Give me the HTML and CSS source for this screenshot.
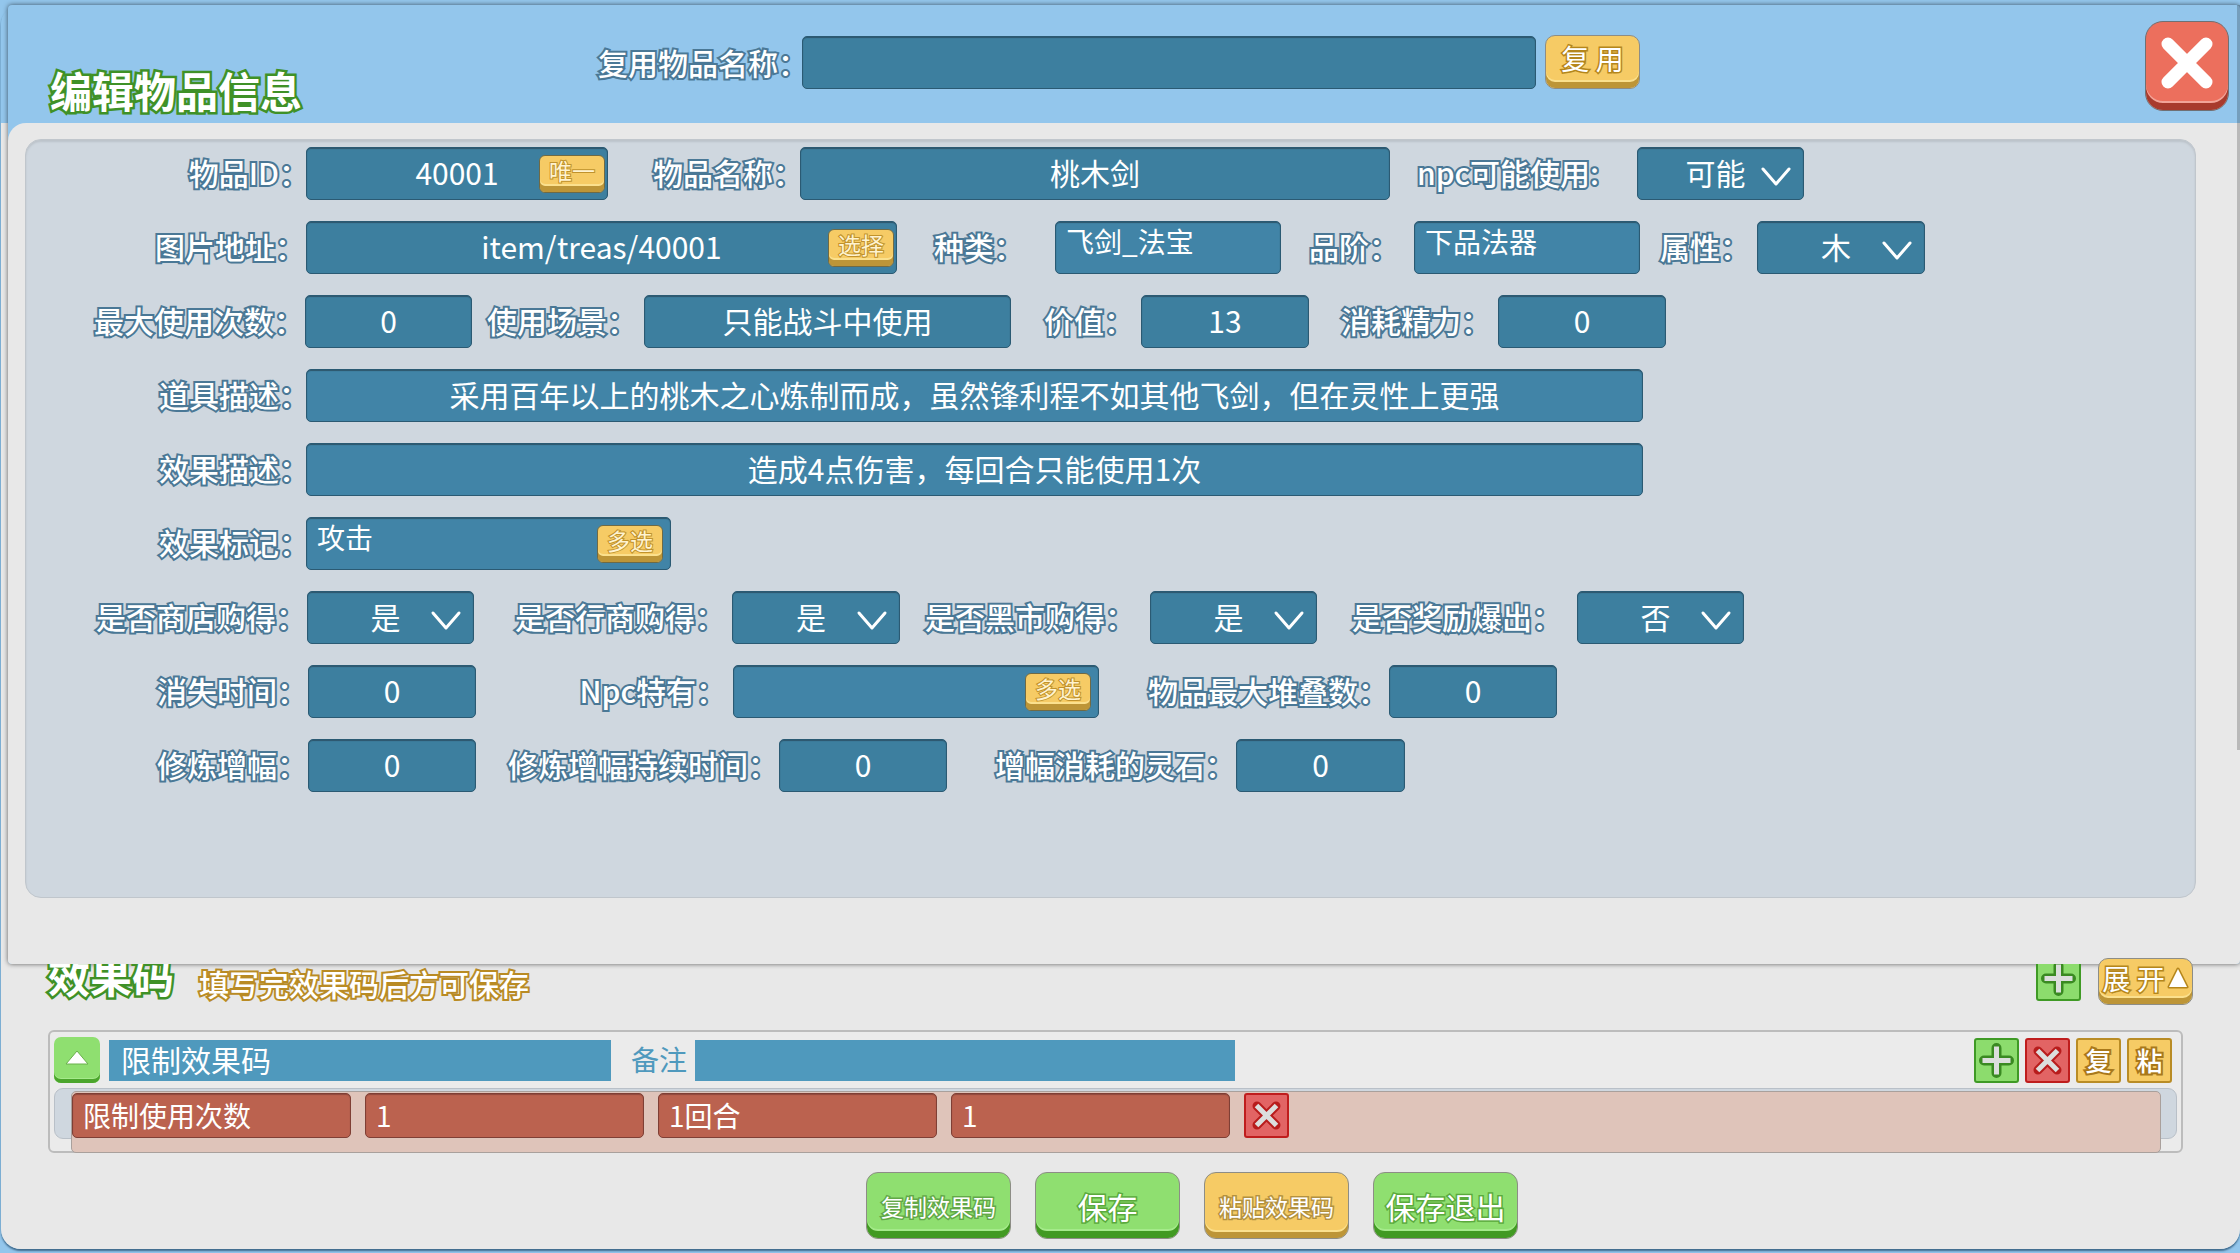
FILE: index.html
```html
<!DOCTYPE html>
<html lang="zh-CN">
<head>
<meta charset="utf-8">
<meta name="viewport" content="width=device-width, initial-scale=1">
<title>编辑物品信息</title>
<link rel="stylesheet" href="styles.css">
</head>
<body>
<svg class="sprite" aria-hidden="true">
  <symbol id="chevron" viewBox="0 0 32 22"><path d="M3 3 L16 18 L29 3" fill="none" stroke="#fff" stroke-width="3" stroke-linecap="round" stroke-linejoin="round"/></symbol>
  <symbol id="plus" viewBox="2 2 41 41"><path d="M22.500 10V35M10 22.500H35" fill="none" stroke="#3a8a22" stroke-width="10" stroke-linecap="round"/><path d="M22.500 8.500V36.500M8.500 22.500H36.500" fill="none" stroke="#dcdedd" stroke-width="5"/></symbol>
  <symbol id="cross" viewBox="2 2 41 41"><path d="M13 13L32 32M32 13L13 32" fill="none" stroke="#b81c1c" stroke-width="9" stroke-linecap="round"/><path d="M12.500 12.500L32.500 32.500M32.500 12.500L12.500 32.500" fill="none" stroke="#dcdedd" stroke-width="5"/></symbol>
</svg>
<main class="frame">
  <form class="dialog">
    <header class="dialog-head">
      <h1 class="title">编辑物品信息</h1>
      <div class="reuse">
        <label class="label" for="reuse">复用物品名称：</label>
        <input class="field reuse-field" id="reuse" type="text">
        <button class="btn btn-gold btn-reuse" type="button">复 用</button>
      </div>
      <button class="close" type="button" aria-label="关闭">
        <svg viewBox="0 0 54 54" width="54" height="54"><path d="M8 8L46 46M46 8L8 46" stroke="#fff" stroke-width="13" stroke-linecap="round"/></svg>
      </button>
    </header>
    <div class="dialog-body">
      <div class="panel">
        <div class="row row-id">
          <label class="label cell" for="item-id">物品ID：</label>
          <div class="stack"><input class="field" id="item-id" type="text" value="40001"><button class="btn btn-gold btn-mini" type="button">唯一</button></div>
          <label class="label cell" for="item-name">物品名称：</label>
          <input class="field" id="item-name" type="text" value="桃木剑">
          <label class="label cell gap-xl" for="npc-use">npc可能使用:</label>
          <div class="stack"><select class="field" id="npc-use"><option>可能</option></select><svg class="chevron"><use href="#chevron"/></svg></div>
        </div>
        <div class="row row-image">
          <label class="label cell gap-sm" for="image">图片地址：</label>
          <div class="stack"><input class="field" id="image" type="text" value="item/treas/40001"><button class="btn btn-gold btn-mini" type="button">选择</button></div>
          <label class="label cell gap-xxl" for="kind">种类：</label>
          <input class="field picked" id="kind" type="text" value="飞剑_法宝" readonly>
          <label class="label cell gap-lg" for="grade">品阶：</label>
          <input class="field picked" id="grade" type="text" value="下品法器" readonly>
          <label class="label cell gap-md" for="element">属性：</label>
          <div class="stack"><select class="field" id="element"><option>木</option></select><svg class="chevron"><use href="#chevron"/></svg></div>
        </div>
        <div class="row row-use">
          <label class="label cell gap-sm" for="max-use">最大使用次数：</label>
          <input class="field" id="max-use" type="text" value="0">
          <label class="label cell gap-md" for="scene">使用场景：</label>
          <input class="field" id="scene" type="text" value="只能战斗中使用">
          <label class="label cell gap-md" for="value">价值：</label>
          <input class="field" id="value" type="text" value="13">
          <label class="label cell gap-md" for="energy">消耗精力：</label>
          <input class="field" id="energy" type="text" value="0">
        </div>
        <div class="row row-text">
          <label class="label cell" for="item-desc">道具描述：</label>
          <input class="field light" id="item-desc" type="text" value="采用百年以上的桃木之心炼制而成，虽然锋利程不如其他飞剑，但在灵性上更强">
        </div>
        <div class="row row-text">
          <label class="label cell" for="effect-desc">效果描述：</label>
          <input class="field light" id="effect-desc" type="text" value="造成4点伤害，每回合只能使用1次">
        </div>
        <div class="row row-mark">
          <label class="label cell" for="mark">效果标记：</label>
          <div class="stack inset"><input class="field picked" id="mark" type="text" value="攻击" readonly><button class="btn btn-gold btn-mini" type="button">多选</button></div>
        </div>
        <div class="row row-source">
          <label class="label cell gap-sm" for="from-shop">是否商店购得：</label>
          <div class="stack"><select class="field" id="from-shop"><option>是</option></select><svg class="chevron"><use href="#chevron"/></svg></div>
          <label class="label cell gap-md" for="from-trader">是否行商购得：</label>
          <div class="stack"><select class="field" id="from-trader"><option>是</option></select><svg class="chevron"><use href="#chevron"/></svg></div>
          <label class="label cell gap-lg" for="from-black">是否黑市购得：</label>
          <div class="stack"><select class="field" id="from-black"><option>是</option></select><svg class="chevron"><use href="#chevron"/></svg></div>
          <label class="label cell gap-lg" for="from-reward">是否奖励爆出：</label>
          <div class="stack"><select class="field" id="from-reward"><option>否</option></select><svg class="chevron"><use href="#chevron"/></svg></div>
        </div>
        <div class="row row-expire">
          <label class="label cell gap-sm" for="expire">消失时间：</label>
          <input class="field" id="expire" type="text" value="0">
          <label class="label cell gap-md" for="npc-own">Npc特有：</label>
          <div class="stack inset"><input class="field picked" id="npc-own" type="text" readonly><button class="btn btn-gold btn-mini" type="button">多选</button></div>
          <label class="label cell gap-sm" for="max-stack">物品最大堆叠数：</label>
          <input class="field" id="max-stack" type="text" value="0">
        </div>
        <div class="row row-boost">
          <label class="label cell gap-sm" for="boost">修炼增幅：</label>
          <input class="field" id="boost" type="text" value="0">
          <label class="label cell gap-sm" for="boost-time">修炼增幅持续时间：</label>
          <input class="field" id="boost-time" type="text" value="0">
          <label class="label cell gap-sm" for="boost-cost">增幅消耗的灵石：</label>
          <input class="field" id="boost-cost" type="text" value="0">
        </div>
      </div>
    </div>
    <span class="scroll-edge"></span>
  </form>

  <section class="effects">
    <div class="effects-head">
      <h2 class="title">效果码</h2>
      <p class="hint">填写完效果码后方可保存</p>
      <button class="tile tile-green" type="button" aria-label="添加"><svg><use href="#plus"/></svg></button>
      <button class="btn btn-gold btn-expand" type="button">展 开<svg viewBox="0 0 22 22" width="22" height="22"><path d="M11 2L20 20H2Z" fill="#fff" stroke="#b5861b" stroke-width="3" paint-order="stroke" stroke-linejoin="round"/></svg></button>
    </div>
    <div class="card">
      <div class="card-head">
        <button class="toggle" type="button" aria-label="收起"><svg viewBox="0 0 24 14" width="24" height="14"><path d="M12 0L23 13H1Z" fill="#fff" stroke="#6ab04c" stroke-width="1"/></svg></button>
        <input class="code code-name" type="text" value="限制效果码" aria-label="效果码名称">
        <label class="note" for="note">备注</label>
        <input class="code code-note" id="note" type="text">
        <div class="tiles">
          <button class="tile tile-green" type="button" aria-label="添加"><svg><use href="#plus"/></svg></button>
          <button class="tile tile-red" type="button" aria-label="删除"><svg><use href="#cross"/></svg></button>
          <button class="tile tile-gold" type="button">复</button>
          <button class="tile tile-gold" type="button">粘</button>
        </div>
      </div>
      <div class="card-rail">
        <div class="effect">
          <input class="arg" type="text" value="限制使用次数" aria-label="效果">
          <input class="arg" type="text" value="1" aria-label="参数一">
          <input class="arg" type="text" value="1回合" aria-label="参数二">
          <input class="arg" type="text" value="1" aria-label="参数三">
          <button class="tile tile-red" type="button" aria-label="删除效果"><svg><use href="#cross"/></svg></button>
        </div>
      </div>
    </div>
    <footer class="actions">
      <button class="btn btn-green btn-long" type="button">复制效果码</button>
      <button class="btn btn-green" type="button">保存</button>
      <button class="btn btn-gold btn-long" type="button">粘贴效果码</button>
      <button class="btn btn-green" type="button">保存退出</button>
    </footer>
  </section>
</main>
</body>
</html>
```
FILE: styles.css
```css
*, *::before, *::after { box-sizing: border-box; }

body {
  margin: 0;
  padding: 5px 0 4px 1px;
  background: #93c6ec;
  color: #fff;
  font: 30px/44px "Noto Sans CJK SC", "Noto Sans", sans-serif;
}

h1, h2, p { margin: 0; font-weight: inherit; }
input, select, button { margin: 0; font: inherit; color: inherit; }
button { padding: 0; cursor: pointer; }
button svg { display: block; }
.sprite { display: none; }

.frame {
  background: linear-gradient(#93c6ec 118px, #e8e8e8 118px);
  border-radius: 20px;
  box-shadow: 0 2px 2px #3f6a8c;
}

/* front dialog */
.dialog {
  position: relative;
  margin-left: 7px;
  background: #93c6ec;
  border-radius: 4px;
  box-shadow: 0 0 5px rgba(0, 0, 0, .6);
}

.dialog-head {
  display: grid;
  grid-template-columns: 548px 1fr auto;
  height: 118px;
  padding: 0 11px 0 42px;
}

.title {
  font-size: 42px;
  font-weight: 700;
  line-height: 60px;
  -webkit-text-stroke: 5px #3f9127;
  paint-order: stroke fill;
}

.dialog-head .title { align-self: end; padding-bottom: 3px; }

.reuse {
  display: flex;
  align-items: center;
  align-self: start;
  gap: 9px;
  padding-top: 30px;
}

.reuse-field { flex: 0 1 734px; }

.label {
  font-weight: 500;
  -webkit-text-stroke: 4px #4a7896;
  paint-order: stroke fill;
  font-feature-settings: "halt";
  white-space: nowrap;
}

.close {
  display: grid;
  justify-items: center;
  width: 84px;
  height: 90px;
  margin-top: 16px;
  padding-top: 14px;
  border: 1px solid #6f7074;
  border-radius: 18px;
  background: #ec6f5d;
  box-shadow: inset 0 -7px #a83a2d, inset 0 -9px #f2a398;
}

.dialog-body {
  padding: 16px 44px 66px 17px;
  background: #e8e8e8;
  border-radius: 18px 0 4px 4px;
}

.scroll-edge {
  position: absolute;
  top: 0;
  right: 0;
  width: 3px;
  height: 745px;
  background: rgba(0, 0, 0, .2);
}

.panel {
  display: grid;
  gap: 21px;
  padding: 7px 0 105px;
  border: 1px solid #c0c6cc;
  border-radius: 16px;
  background: #cfd7df;
  box-shadow: inset 0 2px 2px #bcc3ca;
}

/* each row alternates label and field tracks */
.row { display: grid; height: 53px; align-items: center; }
.row-id { grid-template-columns: 280px 302px 192px 590px 247px 167px; }
.row-image { grid-template-columns: 280px 591px 158px 226px 133px 226px 117px 168px; }
.row-use { grid-template-columns: 279px 167px 172px 367px 130px 168px 189px 168px; }
.row-text { grid-template-columns: 280px 1337px; }
.row-mark { grid-template-columns: 280px 365px; }
.row-source { grid-template-columns: 281px 167px 258px 168px 250px 167px 260px 167px; }
.row-expire { grid-template-columns: 282px 168px 257px 366px 290px 168px; }
.row-boost { grid-template-columns: 282px 168px 303px 168px 289px 169px; }

.cell { padding: 0 12px 3px 0; text-align: right; }
.gap-sm { padding-right: 16px; }
.gap-md { padding-right: 22px; }
.gap-lg { padding-right: 30px; }
.gap-xl { padding-right: 38px; }
.gap-xxl { padding-right: 46px; }

.field {
  width: 100%;
  height: 53px;
  padding: 0 4px 3px;
  border: 1px solid #2b5a73;
  border-radius: 5px;
  outline: 0;
  background: #3d7f9f;
  box-shadow: inset 0 1px 1px #2d566c;
  text-align: center;
}

select.field {
  appearance: none;
  padding: 0 10px 3px 0;
  text-align: center;
  text-align-last: center;
}

.light { background: #4184a7; }

.picked {
  padding: 0 10px 13px;
  background: #4184a7;
  font-size: 28px;
  text-align: left;
}

.stack { display: grid; align-items: center; }
.stack > * { grid-area: 1 / 1; }
.stack > .btn { justify-self: end; margin-right: 3px; }
.stack.inset > .btn { margin-right: 8px; }

.chevron {
  justify-self: end;
  width: 32px;
  height: 22px;
  margin: 6px 12px 0 0;
  pointer-events: none;
}

/* raised buttons */
.btn {
  border: 1px solid #8d8d86;
  border-radius: 10px;
  white-space: pre;
  paint-order: stroke fill;
}

.btn-gold {
  background: #f6cb65;
  box-shadow: inset 0 -6px #bd9537, inset 0 -8px #fbe08d;
  -webkit-text-stroke: 3px #b5861b;
}

.btn-green {
  background: #8fdf70;
  box-shadow: inset 0 -7px #419a22, inset 0 -9px #a5ea8b;
  -webkit-text-stroke: 3px #5aaa3c;
}

.btn-mini {
  width: 66px;
  height: 38px;
  padding-bottom: 8px;
  border-color: #6f6a45;
  border-radius: 6px;
  font-size: 23px;
  line-height: 28px;
  color: #fff3cf;
  -webkit-text-stroke: 2px #c0922c;
}

.btn-reuse {
  width: 95px;
  height: 54px;
  padding-bottom: 8px;
  font-size: 28px;
  line-height: 40px;
}

/* effect codes */
.effects {
  padding: 0 57px 10px 47px;
}

.effects-head {
  display: flex;
  height: 66px;
  margin-right: -10px;
}

.effects-head .title {
  height: 60px;
  margin-top: -19px;
  clip-path: inset(19px -4px 0 -4px);
}

.hint {
  flex: 1;
  margin-left: 25px;
  line-height: 38px;
  font-weight: 500;
  -webkit-text-stroke: 4px #b98b24;
  paint-order: stroke fill;
}

.effects-head .tile {
  margin-top: -8px;
  clip-path: inset(8px 0 0 0);
}

/* the expand button overlaps the dialog's bottom edge */
.btn-expand {
  position: relative;
  display: flex;
  align-items: center;
  justify-content: center;
  gap: 2px;
  width: 95px;
  height: 47px;
  margin: -6px 0 0 17px;
  padding-bottom: 8px;
  font-size: 28px;
  line-height: 38px;
}

.tile {
  display: grid;
  place-items: center;
  width: 45px;
  height: 45px;
  border: 2px solid;
  border-radius: 3px;
}

.tile svg { width: 41px; height: 41px; }
.tile-green { background: #8cdc6d; border-color: #3f9a25; }
.tile-red { background: #e26464; border-color: #bf1d1d; }

.tile-gold {
  background: #f6cb65;
  border-color: #b98c25;
  font-size: 26px;
  font-weight: 500;
  line-height: 36px;
  -webkit-text-stroke: 4px #a9781a;
  paint-order: stroke fill;
}

.card {
  padding: 5px 4px 0;
  border: 2px solid #bcbcbc;
  border-radius: 6px;
  background: #ebebeb;
}

.card-head {
  display: flex;
  align-items: center;
  height: 46px;
}

.toggle {
  display: grid;
  place-items: center;
  width: 46px;
  height: 46px;
  padding-bottom: 4px;
  border: 0;
  border-radius: 7px;
  background: #8fdf70;
  box-shadow: inset 0 -4px #4ba52c, inset 0 -5px #a5ea8b;
}

.code {
  height: 41px;
  padding: 0 12px 2px;
  border: 0;
  background: #4f99bd;
}

.code-name { width: 502px; margin-left: 9px; }
.code-note { width: 540px; }
.note { padding: 0 8px 2px 20px; color: #4f99bd; font-size: 28px; }
.tiles { display: flex; gap: 6px; margin-left: auto; margin-right: 5px; }

.card-rail {
  height: 51px;
  margin: 5px 0 12px;
  padding: 2px 15px 0 16px;
  border: 1px solid #b9c0c8;
  border-radius: 9px;
  background: #cfd7df;
}

.effect {
  display: flex;
  gap: 14px;
  height: 62px;
  padding-top: 1px;
  border: 1px solid #a9a09c;
  border-radius: 5px;
  background: #dfc4ba;
}

.arg {
  width: 279px;
  height: 45px;
  padding: 0 10px 2px;
  border: 1px solid #7f3f35;
  border-radius: 5px;
  background: #bb624f;
  box-shadow: inset 0 1px 1px #8f4a3d;
  font-size: 28px;
}

.actions {
  display: flex;
  justify-content: center;
  gap: 24px;
  padding: 19px 0 0 153px;
}

.actions .btn {
  width: 145px;
  height: 67px;
  border-radius: 12px;
}

.actions .btn-long { font-size: 23px; -webkit-text-stroke-color: #62a848; }
.actions .btn-gold { -webkit-text-stroke-color: #b3913f; }
```
